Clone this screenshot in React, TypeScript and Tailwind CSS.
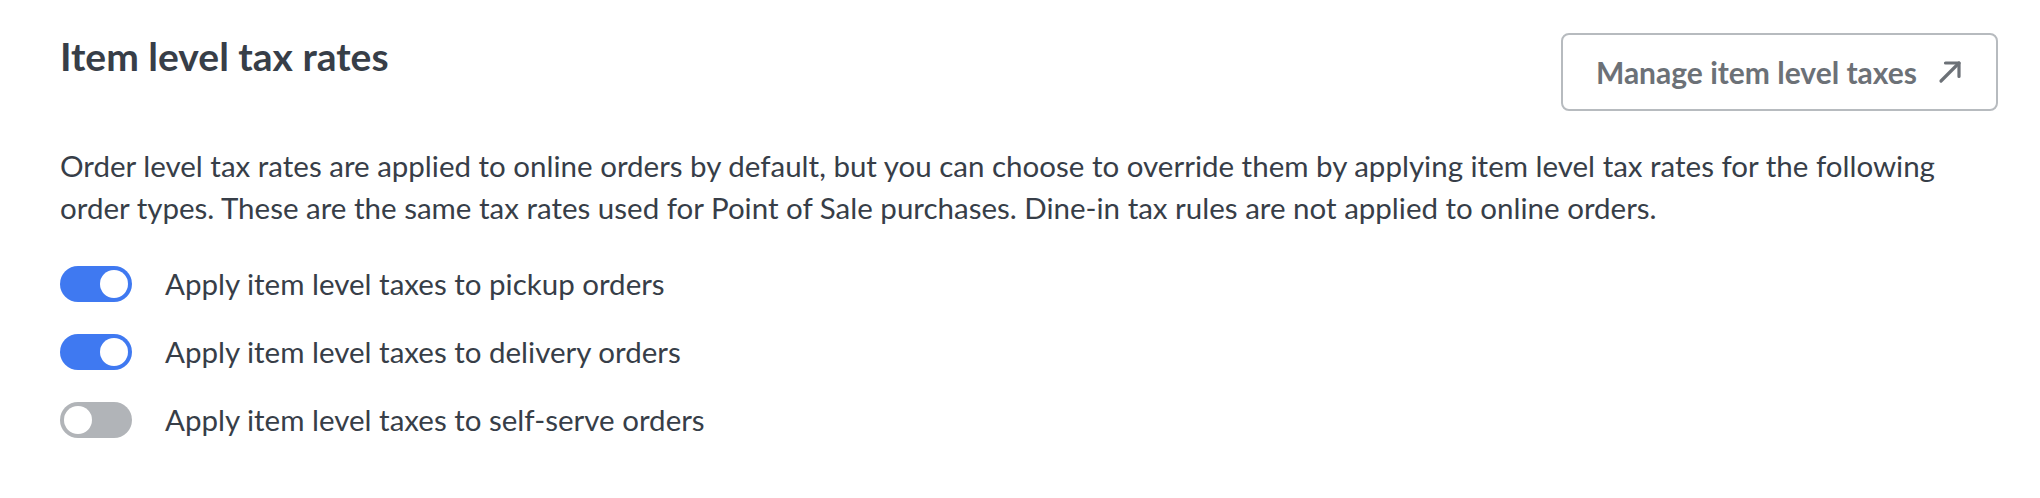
import { useState } from 'react';

type Rule = { id: string; label: string; on: boolean };

const INITIAL_RULES: Rule[] = [
  { id: 'pickup', label: 'Apply item level taxes to pickup orders', on: true },
  { id: 'delivery', label: 'Apply item level taxes to delivery orders', on: true },
  { id: 'self-serve', label: 'Apply item level taxes to self-serve orders', on: false },
];

const Toggle = ({ on, onClick }: { on: boolean; onClick: () => void }): JSX.Element => (
  <button
    type="button"
    role="switch"
    aria-checked={on}
    onClick={onClick}
    className={`flex h-[36px] w-[72px] shrink-0 items-center rounded-full p-[4px] ${
      on ? 'justify-end bg-[#3f79f1]' : 'justify-start bg-[#b1b4b8]'
    }`}
  >
    <span className="block h-[28px] w-[28px] rounded-full bg-white" />
  </button>
);

const App = (): JSX.Element => {
  const [rules, setRules] = useState<Rule[]>(INITIAL_RULES);

  const flip = (id: string) =>
    setRules(prev => prev.map(r => (r.id === id ? { ...r, on: !r.on } : r)));

  return (
    <div className="min-h-[498px] bg-white pl-[60px] pr-[42px] pt-[33px] font-['Lato','Liberation_Sans',sans-serif] text-[#373e48]">
      <div className="flex items-start justify-between">
        <h2 className="mt-[1px] text-[39px] font-bold leading-[44px]">Item level tax rates</h2>
        <button
          type="button"
          className="flex h-[78px] items-center gap-[21px] rounded-[8px] border-2 border-[#b7bbbf] pl-[33px] pr-[34px] text-[30px] font-bold text-[#6c7177]"
        >
          Manage item level taxes
          <svg width="24" height="24" viewBox="0 0 24 24" fill="none" stroke="currentColor" strokeWidth="3.2" strokeLinecap="round" strokeLinejoin="round">
            <path d="M3 21 21 3" />
            <path d="M7.5 3H21v13.5" />
          </svg>
        </button>
      </div>

      <p className="mt-[34px] text-[29.5px] leading-[41.5px]">
        Order level tax rates are applied to online orders by default, but you can choose to override them by
        applying item level tax rates for the following order types. These are the same tax rates used for Point
        of Sale purchases. Dine-in tax rules are not applied to online orders.
      </p>

      <div className="mt-[38px] flex flex-col gap-[32px]">
        {rules.map(rule => (
          <div key={rule.id} className="flex items-center gap-[33px]">
            <Toggle on={rule.on} onClick={() => flip(rule.id)} />
            <span className="text-[29.5px] leading-[36px]">{rule.label}</span>
          </div>
        ))}
      </div>
    </div>
  );
};

export default App;
